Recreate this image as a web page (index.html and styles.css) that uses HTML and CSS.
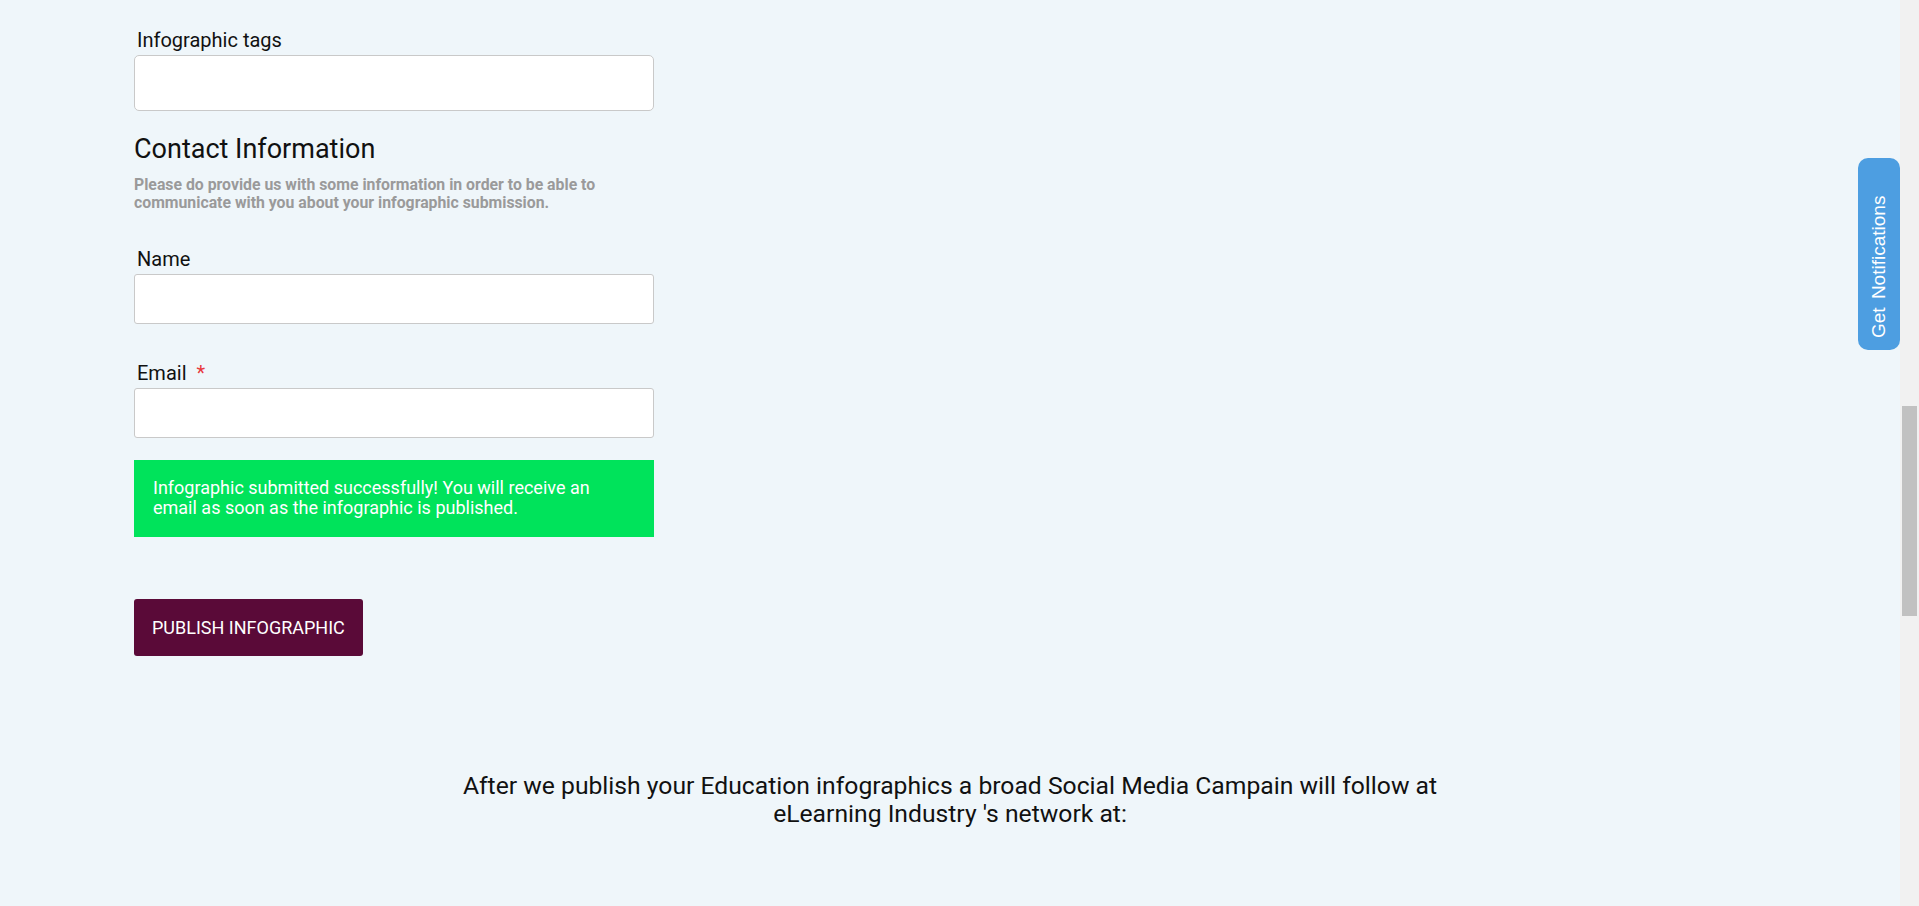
FILE: index.html
```html
<!DOCTYPE html>
<html>
<head>
  <title>Submit Infographic</title>
  <link rel="stylesheet" href="styles.css">
</head>
<body>
  <div class="page">
    <div class="container">
      <form class="submit-form">
        <label class="field-label" for="tags">Infographic tags</label>
        <input class="field-input tall" type="text" id="tags">

        <h3 class="section-title">Contact Information</h3>
        <p class="section-note">Please do provide us with some information in order to be able to communicate with you about your infographic submission.</p>

        <label class="field-label spaced" for="name">Name</label>
        <input class="field-input" type="text" id="name">

        <label class="field-label spaced email-label" for="email">Email<span class="required">*</span></label>
        <input class="field-input" type="email" id="email">

        <div class="alert-success">
          <p>Infographic submitted successfully! You will receive an email as soon as the infographic is published.</p>
        </div>

        <button class="publish-btn" type="button">PUBLISH INFOGRAPHIC</button>
      </form>

      <p class="campaign-text">After we publish your Education infographics a broad Social Media Campain will follow at eLearning Industry 's network at:</p>
    </div>

    <div class="notify-tab">Get Notifications</div>
  </div>

  <div class="scrollbar">
    <div class="scrollbar-thumb"></div>
  </div>
</body>
</html>
```

FILE: styles.css
```css
html, body {
  height: 100%;
}

body {
  margin: 0;
  display: flex;
  overflow: hidden;
  background-color: #eff6fa;
  font-family: Roboto, "Liberation Sans", sans-serif;
  color: #111;
}

.page {
  flex: 1;
  position: relative;
  overflow: hidden;
}

.container {
  max-width: 1632px;
  margin: 0 auto;
  padding-top: 28px;
}

.submit-form {
  width: 520px;
  display: flex;
  flex-direction: column;
}

.field-label {
  display: block;
  padding-left: 3px;
  font-size: 20px;
  line-height: 24px;
  margin-bottom: 3px;
}

.field-label.spaced {
  margin-top: 36px;
}

.field-label.email-label {
  margin-top: 37px;
}

.required {
  color: #e8383d;
  margin-left: 10px;
}

.field-input {
  box-sizing: border-box;
  width: 100%;
  height: 50px;
  border: 1px solid #c9c9c9;
  border-radius: 3px;
  background-color: #fff;
  margin: 0;
  font-family: inherit;
  font-size: 18px;
}

.field-input.tall {
  height: 56px;
  border-radius: 5px;
}

.section-title {
  margin: 22px 0 11px;
  font-size: 27px;
  line-height: 32px;
  font-weight: 400;
}

.section-note {
  margin: 0;
  width: 480px;
  font-size: 15.8px;
  line-height: 17.6px;
  font-weight: 700;
  color: #9a9a9a;
}

.alert-success {
  margin-top: 22px;
  padding: 18px 30px 19px 19px;
  background-color: #00e35b;
  color: #fff;
}

.alert-success p {
  margin: 0;
  font-size: 18px;
  line-height: 20px;
}

.publish-btn {
  align-self: flex-start;
  margin-top: 62px;
  height: 57px;
  padding: 0 18px;
  border: none;
  border-radius: 3px;
  background-color: #5a0a38;
  color: #fff;
  font-family: inherit;
  font-size: 18px;
  cursor: pointer;
}

.campaign-text {
  max-width: 1060px;
  margin: 116px auto 0;
  text-align: center;
  font-size: 24.7px;
  line-height: 28px;
}

.notify-tab {
  position: absolute;
  top: 158px;
  right: 0;
  box-sizing: border-box;
  width: 42px;
  height: 192px;
  padding-top: 12px;
  border-radius: 10px;
  background-color: #4d9ee1;
  color: #fff;
  font-family: "Liberation Sans", Arial, sans-serif;
  font-size: 19px;
  line-height: 42px;
  word-spacing: 3px;
  writing-mode: vertical-rl;
  transform: rotate(180deg);
}

.scrollbar {
  width: 19px;
  background-color: #f1f1f1;
}

.scrollbar-thumb {
  margin: 406px 2px 0 2px;
  height: 210px;
  background-color: #c1c1c1;
}
```
